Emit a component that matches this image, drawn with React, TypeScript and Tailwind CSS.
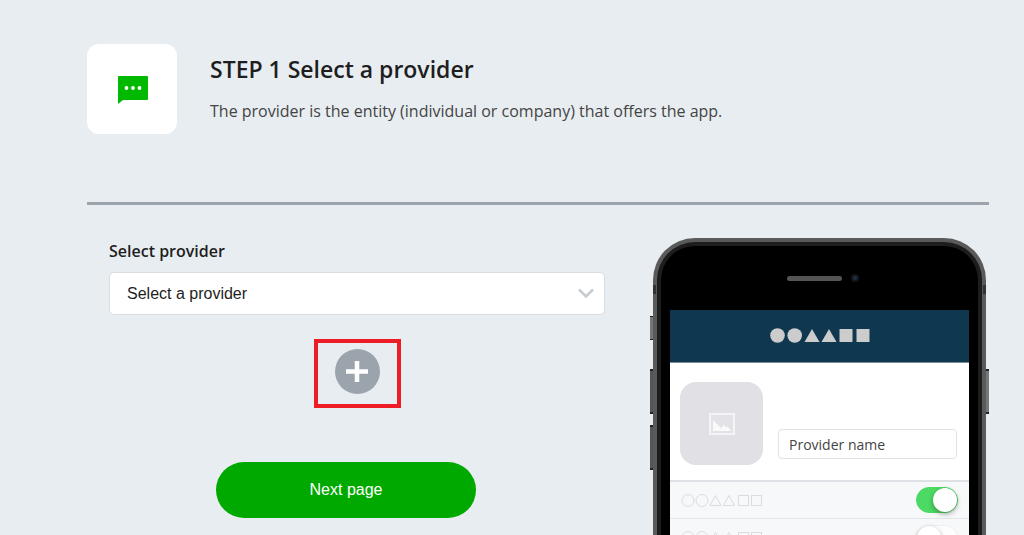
import React, { useState } from 'react';

const ChatIcon = () => (
  <svg width="30" height="28" viewBox="0 0 30 28" aria-hidden="true">
    <path d="M1 0H29Q30 0 30 1V23Q30 24 29 24H5L0 28V1Q0 0 1 0Z" fill="#00b900" />
    <circle cx="8.5" cy="12" r="1.9" fill="#fff" />
    <circle cx="15" cy="12" r="1.9" fill="#fff" />
    <circle cx="21.5" cy="12" r="1.9" fill="#fff" />
  </svg>
);

const PictureIcon = () => (
  <svg width="26" height="22" viewBox="0 0 26 22" aria-hidden="true">
    <rect x="1" y="1" width="24" height="20" fill="#e3e3e7" stroke="#f4f4f6" strokeWidth="2" />
    <path d="M4 18V7L12 15L15 12L17 14.5L18.5 13.5L22 18Z" fill="#fafafb" />
  </svg>
);

const TitleShapes = () => (
  <svg width="100" height="15" viewBox="0 0 100 15" fill="#ccc" aria-hidden="true">
    <circle cx="7.5" cy="7.5" r="7.3" />
    <circle cx="24.7" cy="7.5" r="7.3" />
    <path d="M42 1L49.5 14H34.5Z" />
    <path d="M59 1L66.5 14H51.5Z" />
    <rect x="69.5" y="1" width="13" height="13" />
    <rect x="86.5" y="1" width="13" height="13" />
  </svg>
);

const RowShapes = () => (
  <svg width="82" height="13" viewBox="0 0 82 13" fill="none" stroke="#dcdcde" aria-hidden="true">
    <circle cx="7" cy="6.5" r="6" />
    <circle cx="21" cy="6.5" r="6" />
    <path d="M34.5 1.5L40 11.5H29Z" />
    <path d="M48 1.5L53.5 11.5H42.5Z" />
    <rect x="57.5" y="1.5" width="10" height="10" />
    <rect x="70.5" y="1.5" width="10" height="10" />
  </svg>
);

interface ToggleProps {
  label: string;
  defaultChecked?: boolean;
}

const Toggle: React.FC<ToggleProps> = ({ label, defaultChecked }) => (
  <input
    type="checkbox"
    role="switch"
    aria-label={label}
    defaultChecked={defaultChecked}
    className="appearance-none shrink-0 w-[42px] h-[26px] rounded-full bg-[#fdfdfd] border border-[#eeeff1] checked:bg-[#4cd964] checked:border-[#4cd964] before:block before:size-6 before:rounded-full before:bg-white before:shadow-[0_2px_5px_rgba(0,0,0,0.35)] checked:before:translate-x-4"
  />
);

const PhonePreview = () => (
  <div className="relative w-[339px] shrink-0 px-[3px] flex">
    {/* Side buttons */}
    <div className="absolute left-0 top-[78px] w-[4px] h-[24px] bg-[#777] border-y border-[#222]" />
    <div className="absolute left-0 top-[131px] w-[4px] h-[45px] bg-[#555] border-y-2 border-[#222]" />
    <div className="absolute left-0 top-[187px] w-[4px] h-[45px] bg-[#555] border-y-2 border-[#222]" />
    <div className="absolute right-0 top-[131px] w-[4px] h-[45px] bg-[#777] border-y-2 border-[#222]" />

    <div className="relative flex min-w-0 flex-1 rounded-t-[42px] bg-[#5a5a5a] p-[4px] pb-0">
      {/* Antenna bands */}
      <div className="absolute left-0 top-[47px] w-[3px] h-[9px] bg-[#333]" />
      <div className="absolute right-0 top-[47px] w-[3px] h-[9px] bg-[#333]" />

      <div className="relative flex min-w-0 flex-1 flex-col rounded-t-[38px] border-4 border-b-0 border-[#1d1d1d] bg-black px-[9px]">
        <div className="flex h-[64px] items-center justify-center gap-[9px] pl-[6px]">
          <div className="w-[55px] h-[5px] rounded-full bg-[#555]" />
          <div className="size-[8px] rounded-full border-2 border-[#151515] bg-[#1c2f50]" />
        </div>

        <div className="flex flex-1 flex-col bg-white">
          <div className="flex h-[53px] shrink-0 items-center justify-center border-b border-[#7b8b98] bg-[#0f374f] pb-px">
            <TitleShapes />
          </div>

          <div className="flex h-[117px] shrink-0 items-center gap-[15px] pl-[10px] pr-[12px] pt-1">
            <div className="flex size-[83px] shrink-0 items-center justify-center rounded-2xl bg-[#e0e0e5]">
              <PictureIcon />
            </div>
            <input
              type="text"
              aria-label="Provider name"
              defaultValue="Provider name"
              className="mt-[41px] h-[30px] w-0 flex-1 rounded-sm border border-[#dfe3e8] bg-white px-[10px] text-sm text-[#444] outline-none"
            />
          </div>

          <div className="flex h-[38px] shrink-0 items-center justify-between border-t-2 border-[#dde1e6] bg-[#f7f8fa] px-[11px]">
            <RowShapes />
            <Toggle label="First option" defaultChecked />
          </div>
          <div className="flex h-[38px] shrink-0 items-center justify-between border-t border-[#e2e5e9] bg-[#f7f8fa] px-[11px]">
            <RowShapes />
            <Toggle label="Second option" />
          </div>
        </div>
      </div>
    </div>
  </div>
);

export default function App() {
  const [provider, setProvider] = useState('');

  return (
    <main className="flex h-screen flex-col overflow-hidden bg-[#e8edf1] pl-[87px] pr-[35px] pt-[44px] font-['Open_Sans','Noto_Sans',sans-serif] text-[#1e1e1e]">
      <header className="flex shrink-0 items-start gap-[33px] border-b-[3px] border-[#9ba4ad] pb-[68px]">
        <div className="flex size-[90px] shrink-0 items-center justify-center rounded-xl bg-white pt-px pl-px">
          <ChatIcon />
        </div>
        <div className="pt-[9px]">
          <h1 className="text-[23px] leading-8 font-semibold">STEP 1 Select a provider</h1>
          <p className="mt-3 text-base leading-7 text-[#444]">
            The provider is the entity (individual or company) that offers the app.
          </p>
        </div>
      </header>

      <div className="flex flex-1 gap-[45px] pt-[33px]">
        <form className="flex min-w-0 flex-1 flex-col items-center" onSubmit={e => e.preventDefault()}>
          <div className="flex w-full flex-col pl-[22px]">
            <label htmlFor="provider" className="pt-px text-base leading-6 font-semibold">
              Select provider
            </label>
            <div className="relative mt-[9px]">
              <select
                id="provider"
                value={provider}
                onChange={e => setProvider(e.target.value)}
                className="h-[43px] w-full appearance-none rounded-[5px] border border-[#d8dde2] bg-white pl-[17px] pr-10 font-['Liberation_Sans',Arial,sans-serif] text-base text-[#1e1e1e] outline-none"
              >
                <option value="">Select a provider</option>
              </select>
              <svg
                className="pointer-events-none absolute right-[11px] top-[16px]"
                width="16"
                height="11"
                viewBox="0 0 16 11"
                fill="none"
                stroke="#c6cbd1"
                strokeWidth="2.5"
                aria-hidden="true"
              >
                <path d="M1 1.5L8 8.5L15 1.5" />
              </svg>
            </div>

            <div className="mt-6 self-center border-4 border-[#ee1c25] px-[17px] pt-[6px] pb-[10px]">
              <button
                type="button"
                aria-label="Add provider"
                className="flex size-[45px] items-center justify-center rounded-full bg-[#9ba4ad]"
              >
                <svg width="22" height="22" viewBox="0 0 22 22" aria-hidden="true">
                  <path d="M11 0V21M0 10.5H22" stroke="#fff" strokeWidth="4.5" />
                </svg>
              </button>
            </div>
          </div>

          <button
            type="submit"
            className="mt-[54px] h-14 w-[260px] rounded-full bg-[#00a900] font-['Liberation_Sans',Arial,sans-serif] text-base text-white"
          >
            Next page
          </button>
        </form>

        <PhonePreview />
      </div>
    </main>
  );
}
